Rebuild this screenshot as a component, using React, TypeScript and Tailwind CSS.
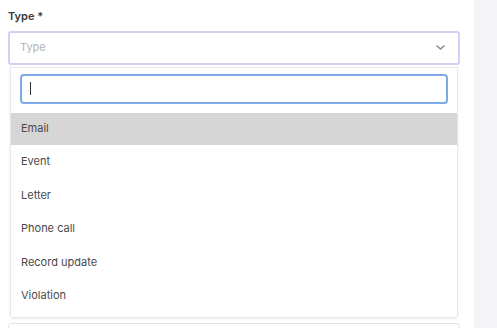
const options = ['Email', 'Event', 'Letter', 'Phone call', 'Record update', 'Violation'];

export default function App() {
  return (
    <div className="flex h-[328px] w-[497px] overflow-hidden bg-white font-['Inter',sans-serif]">
      <div className="w-[474px] pl-[8px] pr-[14px] pt-[8px]">
        <div className="text-[11px] font-semibold text-[#3a3a3a]">Type *</div>
        <div className="mt-[6px] flex h-[34px] items-center justify-between rounded-[3px] border-2 border-[#d9cdf3] pl-[10px] pr-[12px]">
          <span className="text-[11px] text-[#b4b4b4]">Type</span>
          <svg width="11" height="7" viewBox="0 0 11 7" fill="none" stroke="#8c8c99" strokeWidth="1.6">
            <path d="M1.5 1.5 L5.5 5 L9.5 1.5" />
          </svg>
        </div>
        <div className="mx-[2px] mt-[2px] rounded-b-[3px] border border-[#e6e6ec] pb-[5px] pt-[6px] shadow-[0_1px_3px_rgba(0,0,0,0.08)]">
          <div className="px-[9px]">
            <div className="flex h-[30px] items-center rounded-[4px] border-2 border-[#7ea9e8] px-[8px]">
              <span className="h-[13px] w-px bg-[#333]" />
            </div>
          </div>
          <div className="mt-[9px] flex flex-col">
            {options.map((o, i) => (
              <div
                key={o}
                className={
                  i === 0
                    ? 'flex h-[32px] items-center bg-[#d6d6d6] px-[10px] text-[11px] text-[#4a4a4a]'
                    : 'flex h-[33.5px] items-center px-[10px] text-[11px] text-[#4a4a4a]'
                }
              >
                {o}
              </div>
            ))}
          </div>
        </div>
        <div className="mt-[5px] h-[20px] rounded-[3px] border border-[#e3e3e8]" />
      </div>
      <div className="flex-1 bg-[#f5f5f7]" />
    </div>
  );
}
